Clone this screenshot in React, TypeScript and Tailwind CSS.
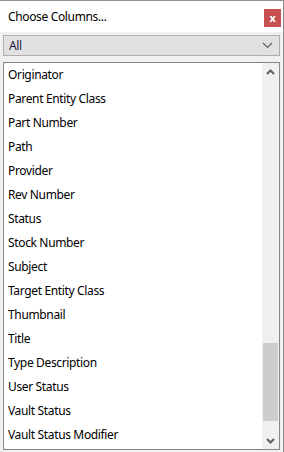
const items = [
  "Originator",
  "Parent Entity Class",
  "Part Number",
  "Path",
  "Provider",
  "Rev Number",
  "Status",
  "Stock Number",
  "Subject",
  "Target Entity Class",
  "Thumbnail",
  "Title",
  "Type Description",
  "User Status",
  "Vault Status",
  "Vault Status Modifier",
]

const Chevron = ({ up = false }: { up?: boolean }) => (
  <svg width="9" height="6" viewBox="0 0 9 6" className={up ? "" : "rotate-180"}>
    <path d="M1 5 L4.5 1.5 L8 5" fill="none" stroke="#606060" strokeWidth="2" />
  </svg>
)

export default function App() {
  return (
    <div
      className="w-[284px] h-[452px] bg-[#f0f0f0] border-t border-r border-[#8c8c8c] flex flex-col text-[12px] tracking-[-0.35px] text-black"
      style={{ fontFamily: '"Noto Sans", "Open Sans", sans-serif' }}
    >
      <div className="h-[31px] bg-white flex items-center justify-between pl-2 pr-[2px] shrink-0">
        <div>Choose Columns...</div>
        <div className="w-[17px] h-[18px] bg-[#c75050] text-white text-[11px] font-bold flex items-center justify-center mt-[3px]">
          x
        </div>
      </div>
      <div className="mx-[3px] mt-[3px] h-[21px] bg-[#e1e1e1] border border-[#adadad] flex items-center justify-between pl-[5px] pr-[6px] shrink-0">
        <span className="text-[#1a1a40]">All</span>
        <svg width="11" height="7" viewBox="0 0 11 7">
          <path d="M1 1 L5.5 5.5 L10 1" fill="none" stroke="#606060" strokeWidth="1.2" />
        </svg>
      </div>
      <div className="mx-[3px] mt-[6px] mb-[2px] flex-1 border border-[#828790] bg-white flex overflow-hidden">
        <div className="flex-1 flex flex-col">
          {items.map((t) => (
            <div key={t} className="h-[24px] flex items-center pl-1 shrink-0">
              {t}
            </div>
          ))}
        </div>
        <div className="w-[17px] bg-[#f0f0f0] flex flex-col items-center">
          <div className="h-[17px] flex items-center justify-center">
            <Chevron up />
          </div>
          <div className="flex-1 w-[15px] flex flex-col justify-end pb-[11px]">
            <div className="h-[78px] bg-[#cdcdcd]" />
          </div>
          <div className="h-[17px] flex items-center justify-center">
            <Chevron />
          </div>
        </div>
      </div>
    </div>
  )
}
